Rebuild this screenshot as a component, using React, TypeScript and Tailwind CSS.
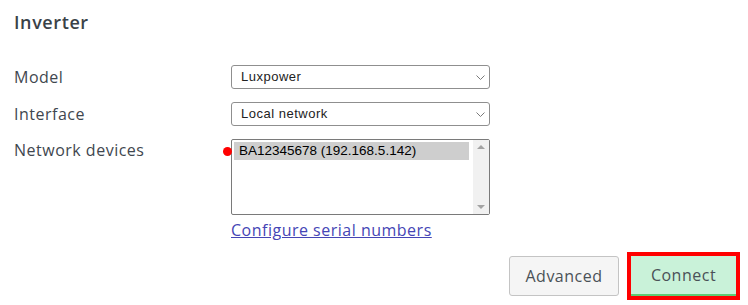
import React from "react";

function Select({ value }: { value: string }) {
  return (
    <div className="relative w-[259px] h-[24px]">
      <select
        className="block appearance-none w-full h-full border border-[#8f8f8f] rounded-[3px] bg-white text-[13px] text-[#222] pl-[9px]"
        style={{ fontFamily: '"Liberation Sans", Arial, sans-serif' }}
        defaultValue={value}
      >
        <option>{value}</option>
      </select>
      <svg
        className="absolute right-[5px] top-[10px] pointer-events-none"
        width="9"
        height="5"
        viewBox="0 0 9 5"
      >
        <path d="M0.5 0.5 L4.5 4.5 L8.5 0.5" fill="none" stroke="#7a7a7a" strokeWidth="1" />
      </svg>
    </div>
  );
}

export default function App() {
  const ui = { fontFamily: '"Open Sans", "Noto Sans", sans-serif' };
  const arial = { fontFamily: '"Liberation Sans", Arial, sans-serif' };
  return (
    <div className="w-[748px] h-[305px] bg-white overflow-hidden relative tracking-[0.5px]" style={ui}>
      <div className="pl-[14px] pt-[9px]">
        <h2 className="text-[18px] font-semibold text-[#3a4248] leading-[26px] tracking-[0.6px]">Inverter</h2>
        <div className="mt-[30px] flex flex-col">
          <div className="flex items-center h-[24px]">
            <div className="w-[217px] text-[16px] text-[#3f474f]">Model</div>
            <Select value="Luxpower" />
          </div>
          <div className="flex items-center h-[24px] mt-[13px]">
            <div className="w-[217px] text-[16px] text-[#3f474f]">Interface</div>
            <Select value="Local network" />
          </div>
          <div className="flex mt-[13px]">
            <div className="w-[217px] text-[16px] text-[#3f474f] leading-[24px] -mt-[1px]">Network devices</div>
            <div className="flex flex-col">
              <div className="relative w-[259px] h-[76px] border border-[#7a7a7a] rounded-[2px] flex bg-white tracking-normal">
                <div className="absolute left-[-9px] top-[7px] w-[9px] h-[9px] rounded-full bg-[#ff0000]" />
                <div className="flex-1 pt-[2px] pl-[2px] pr-[4px]">
                  <div className="h-[18px] bg-[#cecece] text-[13.5px] text-black leading-[18px] pl-[5px]" style={arial}>
                    BA12345678 (192.168.5.142)
                  </div>
                </div>
                <div className="w-[16px] bg-[#f1f1f1] flex flex-col items-center justify-between py-[5px]">
                  <div className="w-0 h-0 border-l-[4px] border-r-[4px] border-b-[4px] border-l-transparent border-r-transparent border-b-[#a3a3a3]" />
                  <div className="w-0 h-0 border-l-[4px] border-r-[4px] border-t-[4px] border-l-transparent border-r-transparent border-t-[#a3a3a3]" />
                </div>
              </div>
              <a href="#" className="mt-[3px] text-[16px] text-[#4545b5] underline leading-[24px]">
                Configure serial numbers
              </a>
            </div>
          </div>
        </div>
      </div>
      <div className="absolute right-[8px] top-[252px] flex items-start gap-[8px]">
        <button className="mt-[4px] w-[110px] h-[40px] border border-[#c4c4c4] rounded-[3px] bg-[#f5f5f5] text-[16px] text-[#4a5157]">
          Advanced
        </button>
        <div className="border-[4px] border-[#ff0000] p-0">
          <button className="w-[105px] h-[40px] bg-[#c9f2d9] border-b-[2px] border-[#5fcb74] text-[16px] text-[#4a5157]">
            Connect
          </button>
        </div>
      </div>
    </div>
  );
}
